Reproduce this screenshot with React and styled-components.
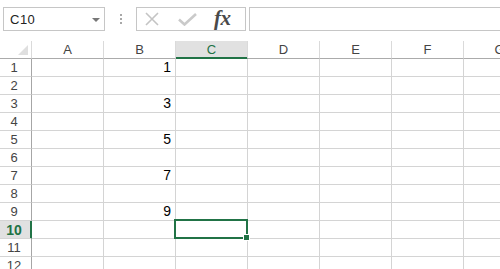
import React from "react";
import styled, { createGlobalStyle, css } from "styled-components";

const Global = createGlobalStyle`
  html, body { margin: 0; padding: 0; background: #fff; }
  body { width: 500px; height: 269px; overflow: hidden; font-family: "Liberation Sans", Arial, sans-serif; }
`;

const GREEN = "#217346";

const Page = styled.div`
  width: 500px;
  height: 269px;
  overflow: hidden;
`;

const FormulaBar = styled.div`
  display: flex;
  align-items: stretch;
  height: 24px;
  padding-top: 7px;
  margin-bottom: 10px;
`;

const NameBox = styled.div`
  box-sizing: border-box;
  margin-left: 3px;
  width: 102px;
  border: 1px solid #c6c6c6;
  display: flex;
  align-items: center;
  justify-content: space-between;
  padding: 0 4px 0 6px;
  font-size: 13px;
  letter-spacing: 0.5px;
  color: #222;
`;

const Caret = styled.span`
  width: 0;
  height: 0;
  border-left: 4px solid transparent;
  border-right: 4px solid transparent;
  border-top: 4px solid #777;
  margin-top: 1px;
`;

const Dots = styled.div`
  width: 31px;
  display: flex;
  flex-direction: column;
  align-items: center;
  justify-content: center;
  gap: 2px;
  span {
    width: 2px;
    height: 2px;
    background: #a8a8a8;
  }
`;

const FuncBox = styled.div`
  box-sizing: border-box;
  width: 110px;
  border: 1px solid #c6c6c6;
  display: flex;
  align-items: center;
  padding-left: 8px;
`;

const IconSlot = styled.span`
  display: flex;
  margin-left: ${(p) => p.$gap || 0}px;
`;

const Fx = styled.span`
  font-family: "Liberation Serif", "Times New Roman", serif;
  font-style: italic;
  font-weight: bold;
  font-size: 21px;
  color: #4a4a4a;
  margin-left: 17px;
  letter-spacing: -0.5px;
  line-height: 1;
  margin-top: -1px;
`;

const FormulaInput = styled.div`
  flex: 1;
  margin-left: 3px;
  margin-right: -4px;
  border: 1px solid #c6c6c6;
`;

const Sheet = styled.div`
  display: grid;
  grid-template-columns: 32px repeat(7, 72px);
  grid-auto-rows: 18px;
`;

const base = css`
  box-sizing: border-box;
  border-right: 1px solid #d4d4d4;
  border-bottom: 1px solid #d4d4d4;
  position: relative;
`;

const Corner = styled.div`
  ${base};
  border-right-color: #dadada;
  border-bottom-color: #ababab;
  &::after {
    content: "";
    position: absolute;
    right: 3px;
    bottom: 3px;
    width: 0;
    height: 0;
    border-left: 10px solid transparent;
    border-bottom: 10px solid #dfdfdf;
  }
`;

const ColHeader = styled.div`
  ${base};
  border-right-color: #dadada;
  border-bottom-color: ${(p) => (p.$active ? GREEN : "#ababab")};
  box-shadow: ${(p) => (p.$active ? `inset 0 -1px 0 ${GREEN}` : "none")};
  background: ${(p) => (p.$active ? "#e1e1e1" : "#fff")};
  color: ${(p) => (p.$active ? GREEN : "#444")};
  font-size: 13px;
  display: flex;
  align-items: center;
  justify-content: center;
`;

const RowHeader = styled.div`
  ${base};
  border-right-color: ${(p) => (p.$active ? GREEN : "#a6a6a6")};
  box-shadow: ${(p) => (p.$active ? `inset -1px 0 0 ${GREEN}` : "none")};
  background: ${(p) => (p.$active ? "#e1e1e1" : "#fff")};
  color: ${(p) => (p.$active ? GREEN : "#444")};
  font-weight: ${(p) => (p.$active ? "bold" : "normal")};
  font-size: ${(p) => (p.$active ? "14px" : "13px")};
  display: flex;
  align-items: center;
  justify-content: center;
  padding-right: 3px;
`;

const Cell = styled.div`
  ${base};
  font-size: 14px;
  line-height: 17px;
  text-align: right;
  padding-right: 4px;
  color: #000;
`;

const Selection = styled.div`
  position: absolute;
  left: -2px;
  top: -2px;
  right: -1px;
  bottom: -1px;
  border: 2px solid ${GREEN};
  z-index: 2;
`;

const Handle = styled.span`
  position: absolute;
  right: -4px;
  bottom: -4px;
  width: 5px;
  height: 5px;
  background: ${GREEN};
  border: 1px solid #fff;
`;

const COLS = ["A", "B", "C", "D", "E", "F", "G"];
const VALUES = { 1: "1", 3: "3", 5: "5", 7: "7", 9: "9" };
const ACTIVE_COL = "C";
const ACTIVE_ROW = 10;

export default function App() {
  const rows = Array.from({ length: 12 }, (_, i) => i + 1);
  return (
    <Page>
      <Global />
      <FormulaBar>
        <NameBox>
          <span>C10</span>
          <Caret />
        </NameBox>
        <Dots>
          <span />
          <span />
          <span />
        </Dots>
        <FuncBox>
          <IconSlot>
            <svg width="14" height="14" viewBox="0 0 14 14">
              <path d="M1 1 L13 13 M13 1 L1 13" stroke="#c4c4c4" strokeWidth="1.6" fill="none" />
            </svg>
          </IconSlot>
          <IconSlot $gap={19}>
            <svg width="19" height="14" viewBox="0 0 19 14">
              <path d="M1 7.5 L6.5 12.5 L18 2" stroke="#cacaca" strokeWidth="2.6" fill="none" />
            </svg>
          </IconSlot>
          <Fx>fx</Fx>
        </FuncBox>
        <FormulaInput />
      </FormulaBar>
      <Sheet>
        <Corner />
        {COLS.map((c) => (
          <ColHeader key={c} $active={c === ACTIVE_COL}>
            {c}
          </ColHeader>
        ))}
        {rows.map((r) => (
          <React.Fragment key={r}>
            <RowHeader $active={r === ACTIVE_ROW}>{r}</RowHeader>
            {COLS.map((c) => (
              <Cell key={c}>
                {c === "B" && VALUES[r]}
                {c === ACTIVE_COL && r === ACTIVE_ROW && (
                  <Selection>
                    <Handle />
                  </Selection>
                )}
              </Cell>
            ))}
          </React.Fragment>
        ))}
      </Sheet>
    </Page>
  );
}
